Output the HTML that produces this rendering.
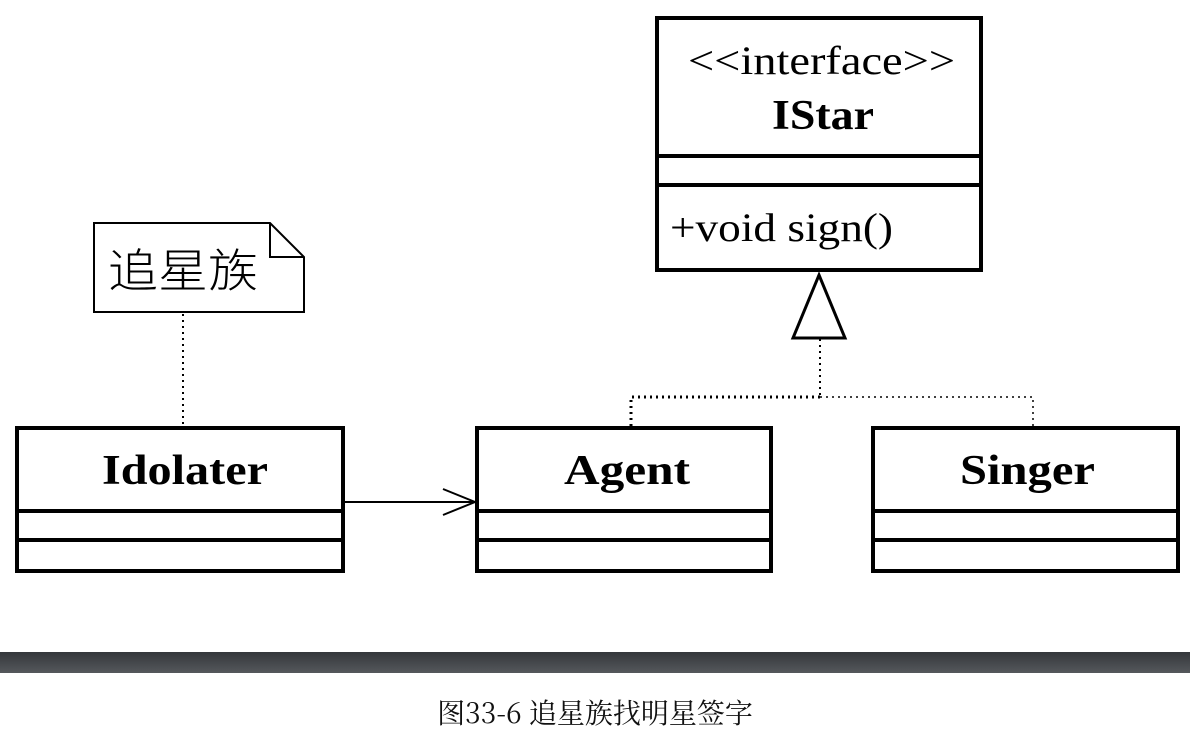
<!DOCTYPE html>
<html><head><meta charset="utf-8"><style>
body{margin:0;width:1190px;height:730px;background:#fff;overflow:hidden;position:relative}
.bar{position:absolute;left:0;top:652px;width:1190px;height:21px;background:linear-gradient(#34373b,#55585c)}
.cap{position:absolute;left:0;width:1190px;top:692px;text-align:center;font:28px "Noto Serif CJK SC","Liberation Serif",serif;color:#111}
</style></head><body>
<svg width="1190" height="650" style="position:absolute;left:0;top:0" font-family="Liberation Serif, serif">
<g fill="none" stroke="#000" stroke-width="4">
<rect x="657" y="18" width="324" height="252"/>
<line x1="657" y1="156" x2="981" y2="156"/>
<line x1="657" y1="185" x2="981" y2="185"/>
<rect x="17" y="428" width="326" height="143"/>
<line x1="17" y1="511" x2="343" y2="511"/>
<line x1="17" y1="540" x2="343" y2="540"/>
<rect x="477" y="428" width="294" height="143"/>
<line x1="477" y1="511" x2="771" y2="511"/>
<line x1="477" y1="540" x2="771" y2="540"/>
<rect x="873" y="428" width="305" height="143"/>
<line x1="873" y1="511" x2="1178" y2="511"/>
<line x1="873" y1="540" x2="1178" y2="540"/>
</g>
<path d="M94 223 H270 L304 257 V312 H94 Z M270 223 V257 H304" fill="none" stroke="#000" stroke-width="2"/>
<line x1="183" y1="314" x2="183" y2="426" stroke="#000" stroke-width="2" stroke-dasharray="2,4"/>
<line x1="345" y1="502" x2="475" y2="502" stroke="#000" stroke-width="2"/>
<path d="M443 489 L475 502 L443 515" fill="none" stroke="#000" stroke-width="2"/>
<path d="M819 275 L845 338 L793 338 Z" fill="#fff" stroke="#000" stroke-width="3"/>
<g stroke="#000" stroke-dasharray="2,4" fill="none">
<path d="M820 339 V397" stroke-width="2"/>
<path d="M820 397 H631 V427" stroke-width="3"/>
<path d="M820 397 H1033 V427" stroke-width="1.5"/>
</g>
<text x="688" y="74" font-size="40" textLength="267" lengthAdjust="spacingAndGlyphs">&lt;&lt;interface&gt;&gt;</text>
<text x="772" y="129" font-size="42" font-weight="bold" textLength="102" lengthAdjust="spacingAndGlyphs">IStar</text>
<text x="670" y="241" font-size="40" textLength="223" lengthAdjust="spacingAndGlyphs">+void sign()</text>
<text x="102" y="484" font-size="42" font-weight="bold" textLength="166" lengthAdjust="spacingAndGlyphs">Idolater</text>
<text x="564" y="484" font-size="42" font-weight="bold" textLength="126" lengthAdjust="spacingAndGlyphs">Agent</text>
<text x="960" y="484" font-size="42" font-weight="bold" textLength="135" lengthAdjust="spacingAndGlyphs">Singer</text>
<text x="108" y="287" font-size="46" font-family="Noto Sans CJK SC, sans-serif" font-weight="300" textLength="150" lengthAdjust="spacingAndGlyphs">追星族</text>
</svg>
<div class="bar"></div>
<div class="cap">图33-6 追星族找明星签字</div>
</body></html>
